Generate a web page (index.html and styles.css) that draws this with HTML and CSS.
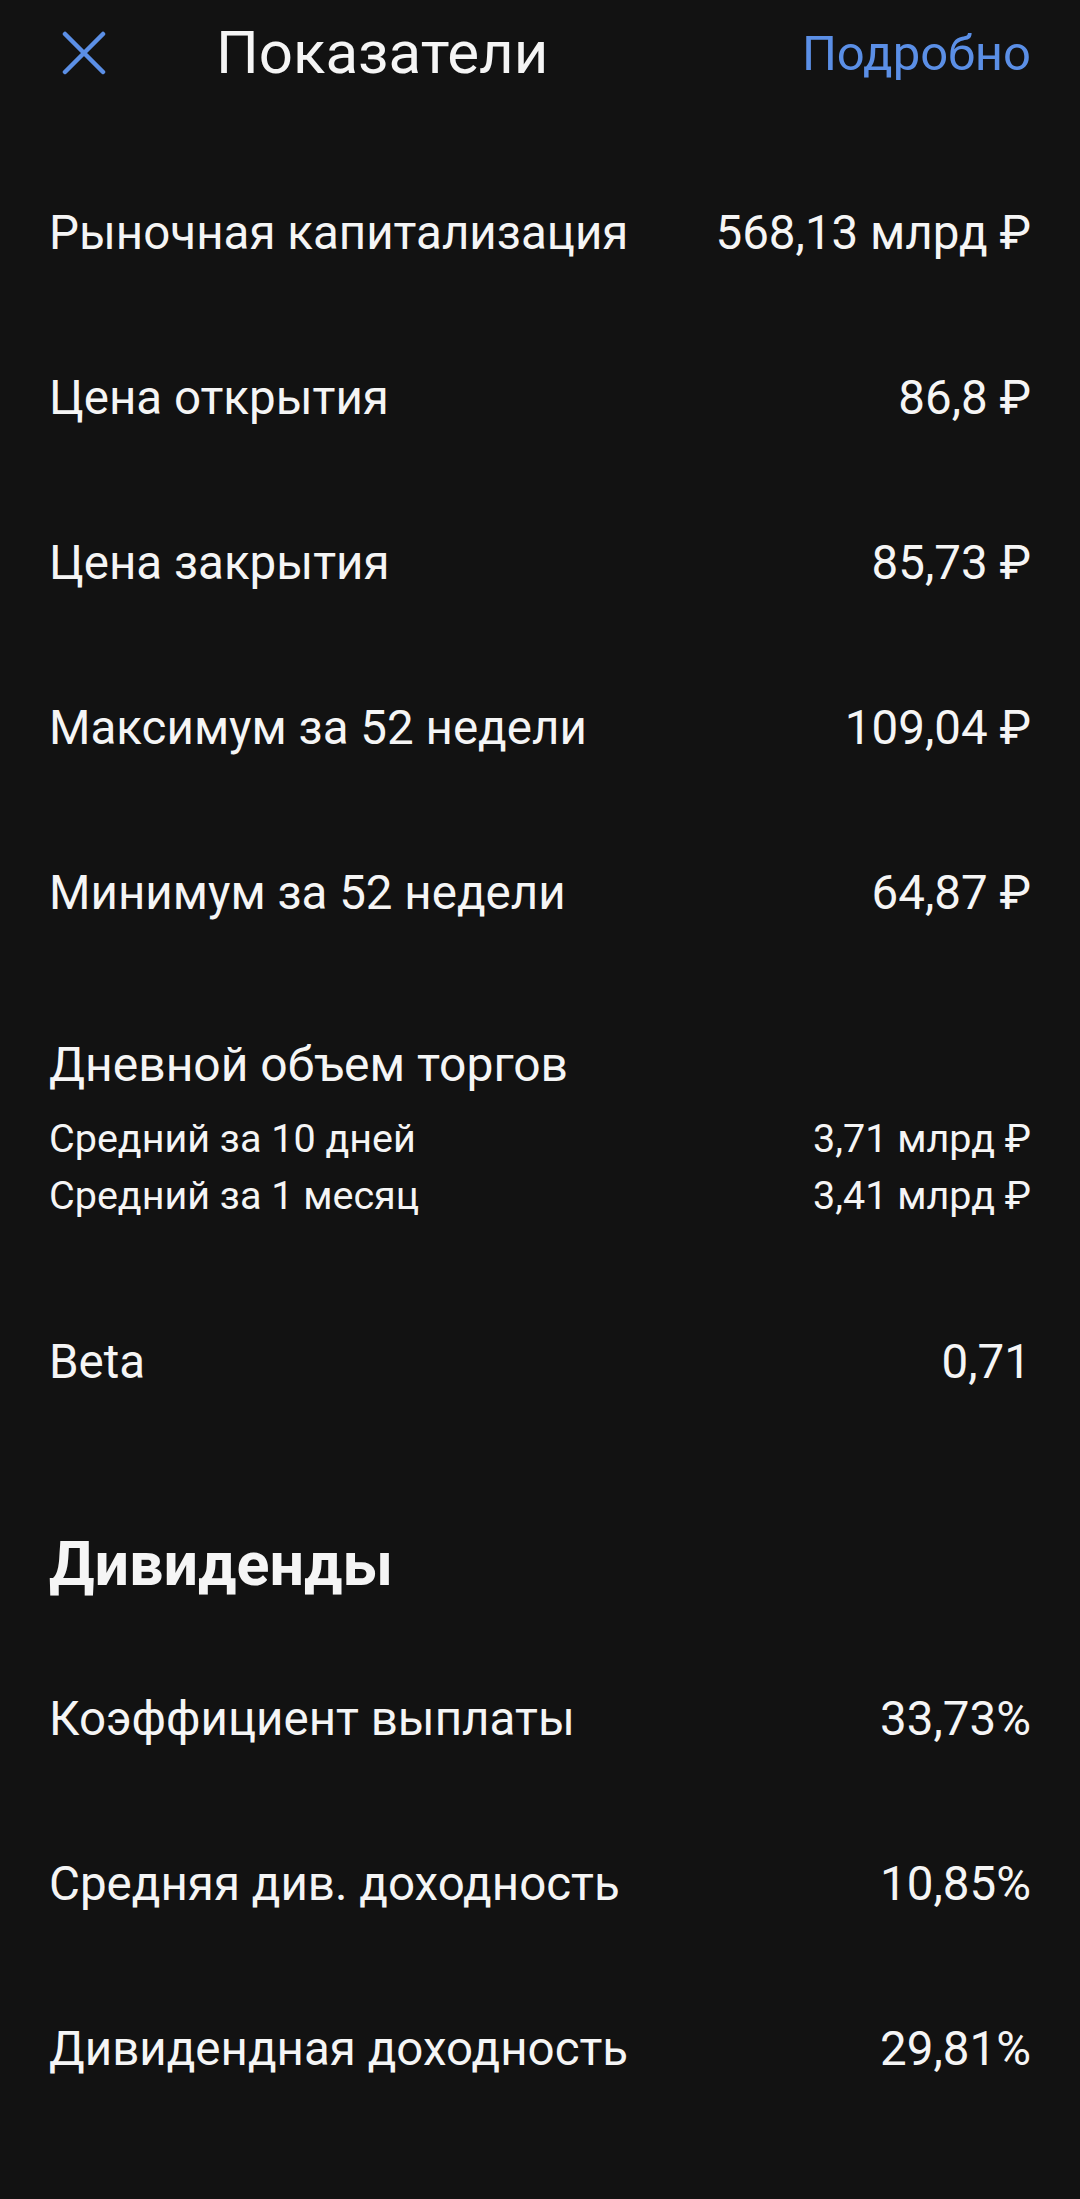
FILE: index.html
```html
<!DOCTYPE html>
<html lang="ru">
<head>
  <meta charset="UTF-8" />
  <meta name="viewport" content="width=device-width, initial-scale=1.0" />
  <title>Показатели</title>
  <link rel="stylesheet" href="styles.css">
</head>
<body>
  <div class="screen">
    <header class="top-bar">
      <button class="close-btn" aria-label="Закрыть">
        <svg width="44" height="44" viewBox="0 0 44 44">
          <path d="M3 3 L41 41 M41 3 L3 41" stroke="#5b8fe6" stroke-width="4.5" stroke-linecap="round" fill="none" />
        </svg>
      </button>
      <h1 class="title">Показатели</h1>
      <a class="more-link" href="#">Подробно</a>
    </header>

    <section class="stats">
      <div class="row"><span>Рыночная капитализация</span><span>568,13 млрд ₽</span></div>
      <div class="row"><span>Цена открытия</span><span>86,8 ₽</span></div>
      <div class="row"><span>Цена закрытия</span><span>85,73 ₽</span></div>
      <div class="row"><span>Максимум за 52 недели</span><span>109,04 ₽</span></div>
      <div class="row"><span>Минимум за 52 недели</span><span>64,87 ₽</span></div>

      <div class="volume">
        <div class="volume-title">Дневной объем торгов</div>
        <div class="sub-row"><span>Средний за 10 дней</span><span>3,71 млрд ₽</span></div>
        <div class="sub-row"><span>Средний за 1 месяц</span><span>3,41 млрд ₽</span></div>
      </div>

      <div class="row"><span>Beta</span><span>0,71</span></div>
    </section>

    <h2 class="section-title">Дивиденды</h2>

    <section class="stats">
      <div class="row"><span>Коэффициент выплаты</span><span>33,73%</span></div>
      <div class="row"><span>Средняя див. доходность</span><span>10,85%</span></div>
      <div class="row"><span>Дивидендная доходность</span><span>29,81%</span></div>
    </section>
  </div>
</body>
</html>
```

FILE: styles.css
```css
body {
  margin: 0;
  padding: 0;
  background-color: #121212;
  color: #f5f5f5;
  font-family: Roboto, 'Noto Sans', sans-serif;
}

.screen {
  width: 1080px;
  min-height: 2199px;
  padding: 0 49px;
  box-sizing: border-box;
}

.top-bar {
  height: 106px;
  display: flex;
  align-items: center;
}

.close-btn {
  background: none;
  border: none;
  padding: 0;
  margin-left: 13px;
  width: 44px;
  height: 44px;
  display: flex;
  cursor: pointer;
}

.title {
  margin: 0 0 0 110px;
  font-size: 60px;
  font-weight: 400;
  line-height: 1;
  flex: 1;
}

.more-link {
  color: #5b8fe6;
  font-size: 49px;
  text-decoration: none;
}

.stats {
  display: flex;
  flex-direction: column;
}

.top-bar + .stats {
  margin-top: 44px;
}

.row {
  height: 165px;
  display: flex;
  justify-content: space-between;
  align-items: center;
  font-size: 47.5px;
}

.volume {
  padding: 60px 0 55px;
}

.volume-title {
  font-size: 48px;
  line-height: 60px;
  margin-bottom: 15px;
}

.sub-row {
  display: flex;
  justify-content: space-between;
  font-size: 39.5px;
  line-height: 57px;
}

.section-title {
  margin: 80px 0 32px;
  font-size: 61px;
  font-weight: 700;
  line-height: 80px;
}
```
